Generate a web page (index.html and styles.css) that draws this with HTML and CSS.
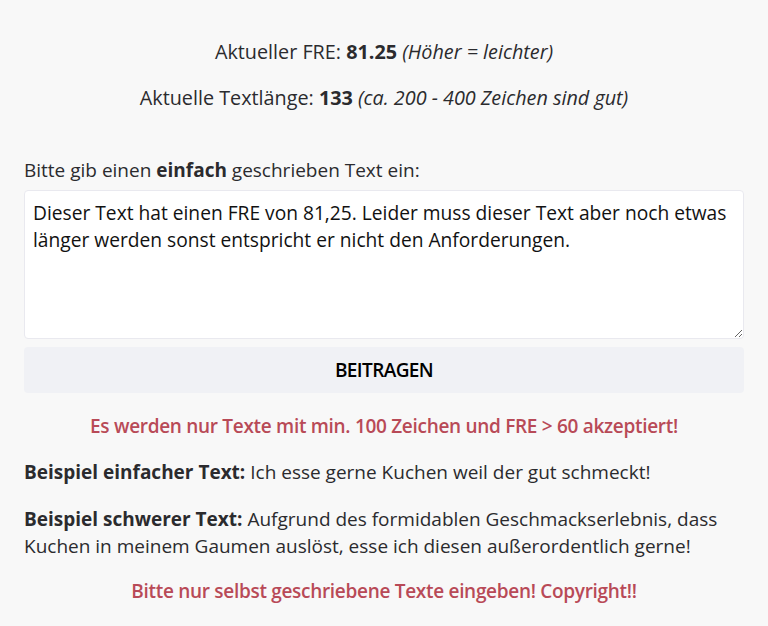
FILE: index.html
```html
<!DOCTYPE html>
<html>
<head><meta charset="utf-8"/>
<title>FRE Rechner</title>
<link rel="stylesheet" href="styles.css">
</head>
<body>
<div class="page">
    <div class="stats">
        <p>Aktueller FRE: <b>81.25</b> <i>(Höher = leichter)</i></p>
        <p>Aktuelle Textlänge: <b>133</b> <i>(ca. 200 - 400 Zeichen sind gut)</i></p>
    </div>
    <form class="entry">
        <label for="text">Bitte gib einen <b>einfach</b> geschrieben Text ein:</label>
        <textarea id="text">Dieser Text hat einen FRE von 81,25. Leider muss dieser Text aber noch etwas länger werden sonst entspricht er nicht den Anforderungen.</textarea>
        <button type="button">BEITRAGEN</button>
    </form>
    <p class="warn">Es werden nur Texte mit min. 100 Zeichen und FRE &gt; 60 akzeptiert!</p>
    <p class="example"><b>Beispiel einfacher Text:</b> Ich esse gerne Kuchen weil der gut schmeckt!</p>
    <p class="example"><b>Beispiel schwerer Text:</b> Aufgrund des formidablen Geschmackserlebnis, dass Kuchen in meinem Gaumen auslöst, esse ich diesen außerordentlich gerne!</p>
    <p class="warn last">Bitte nur selbst geschriebene Texte eingeben! Copyright!!</p>
</div>
</body>
</html>
```
FILE: styles.css
```css
body { margin: 0; background: #f8f8f8; color: #2b2b2e; font-family: "Open Sans", sans-serif; font-size: 19px; line-height: 27px; }

.page {
    padding: 38px 24px 0 24px;
}

.stats p {
    font-size: 19.8px;
    text-align: center;
    margin: 0 0 19px 0;
}

.entry {
    display: flex;
    flex-direction: column;
    margin-top: 46px;
}

.entry label {
    margin-bottom: 6px;
}

.entry textarea {
    height: 149px;
    box-sizing: border-box;
    border: 1px solid #e9e9ef;
    border-radius: 4px;
    background: #fff;
    color: #111;
    font-family: "Open Sans", sans-serif;
    font-size: 19.2px;
    line-height: 27px;
    padding: 7.5px 8px;
    resize: vertical;
}

.entry button {
    margin-top: 8px;
    height: 46px;
    border: none;
    border-radius: 4px;
    background: #f0f1f5;
    color: #000;
    font-family: "Open Sans", sans-serif;
    font-size: 19px;
    font-weight: 600;
    letter-spacing: -0.6px;
}

.warn {
    color: #b84a57;
    font-weight: 600;
    letter-spacing: -0.3px;
    text-align: center;
    margin: 19.5px 0 0 0;
}

.warn.last {
    margin-top: 18px;
}

.example {
    margin: 19.5px 0 0 0;
}
```
